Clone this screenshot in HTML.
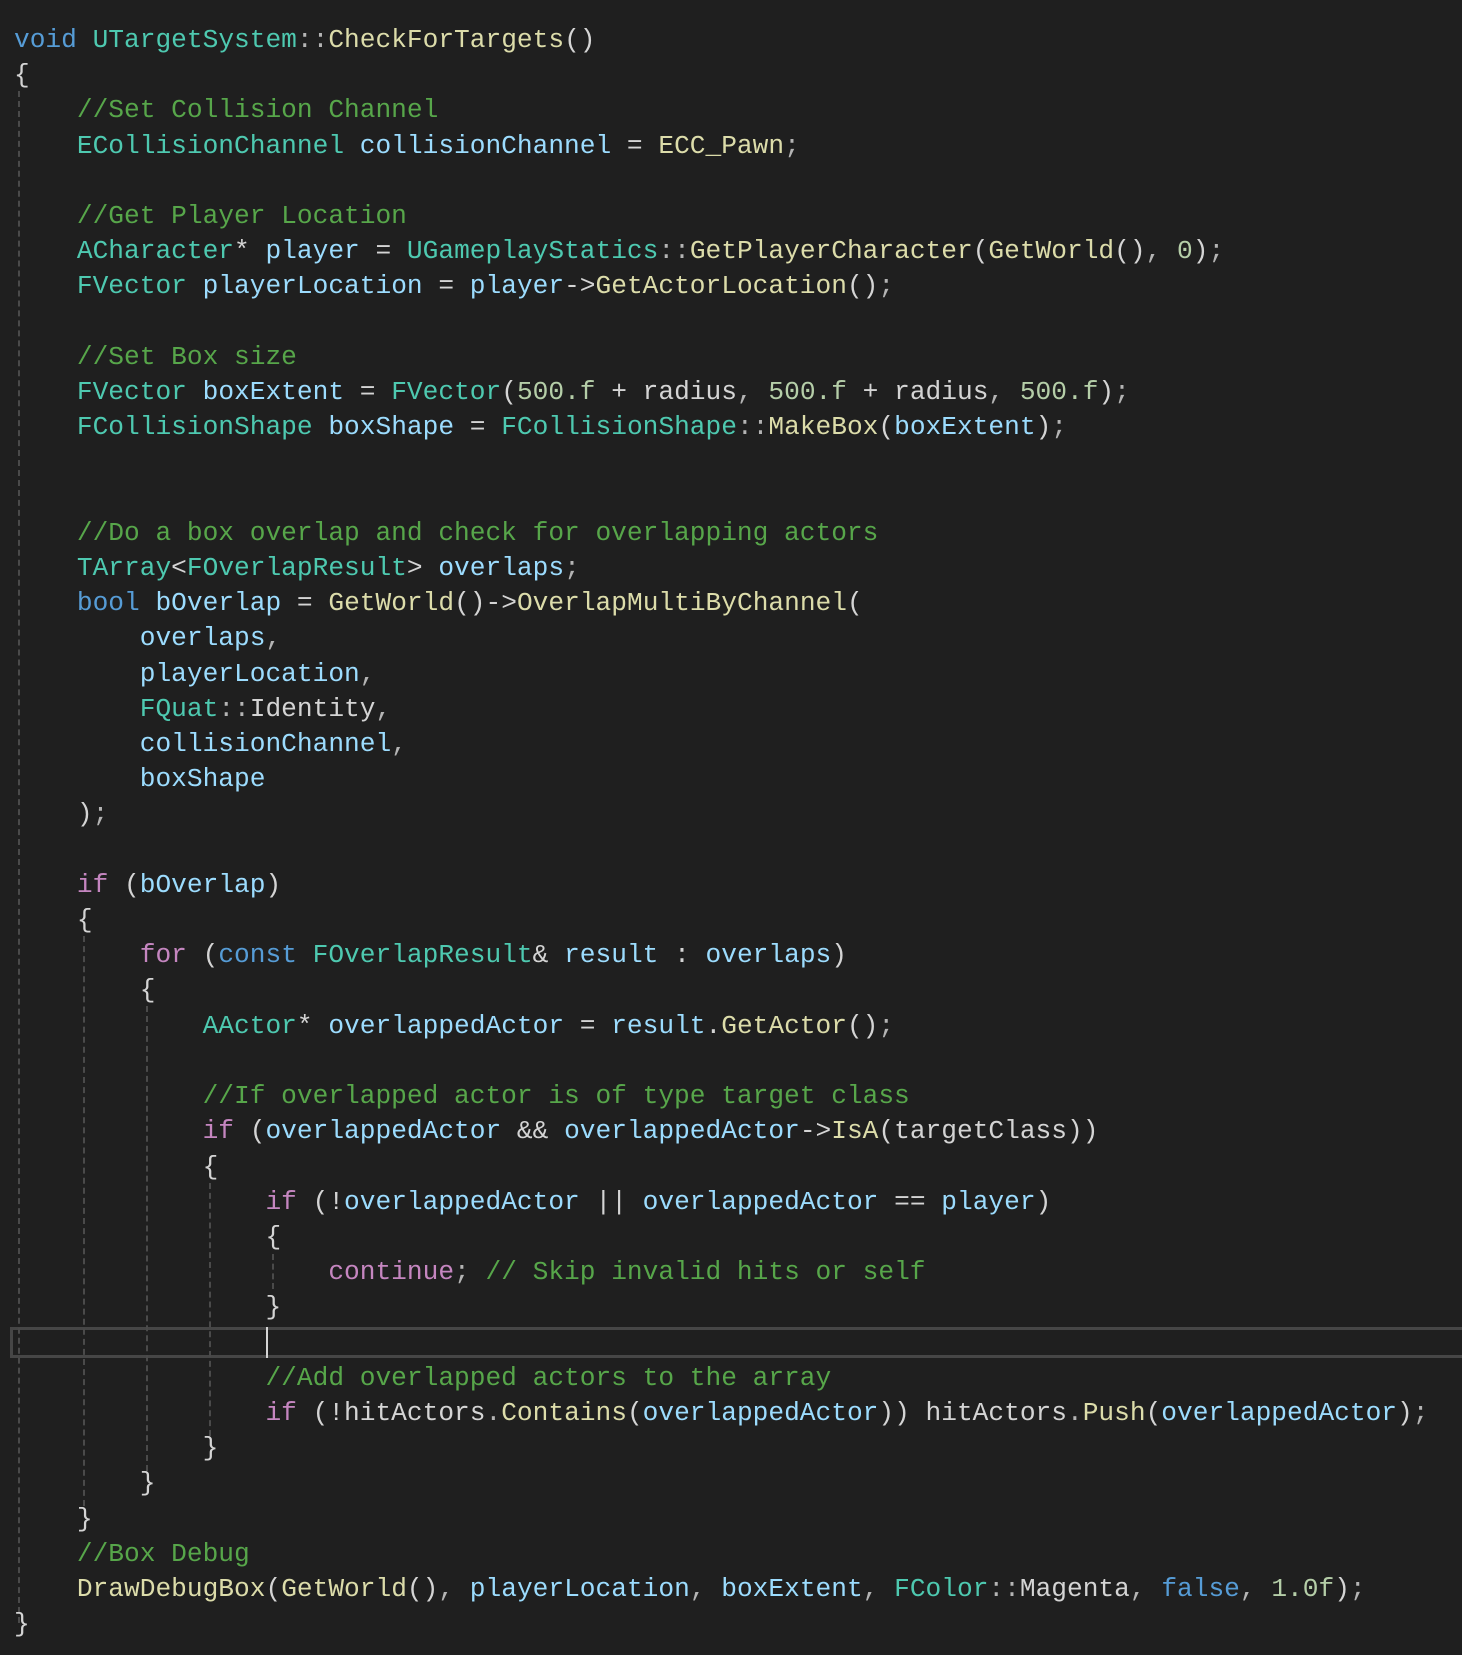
<!DOCTYPE html>
<html><head><meta charset="utf-8"><style>
html,body{margin:0;padding:0;background:#1f1f1f;width:1462px;height:1655px;overflow:hidden}
pre{position:absolute;left:14px;top:23px;margin:0;font-family:"Liberation Mono",monospace;font-size:26.2px;line-height:35.2px;color:#d4d4d4;white-space:pre}
.k{color:#569cd6}.c{color:#c586c0}.t{color:#4ec9b0}.f{color:#dcdcaa}.v{color:#9cdcfe}.m{color:#57a64a}.n{color:#b5cea8}.p{color:#b4b4b4}
.g{position:absolute;width:0;border-left:2px dashed #4a4a4a}
.hl{position:absolute;left:10px;top:1327px;width:1460px;height:25px;border:3px solid #464646;border-right:none}
.cur{position:absolute;left:266px;top:1327px;width:2px;height:31px;background:#d4d4d4}
</style></head><body>
<div class="hl"></div>
<div class="g" style="left:18px;top:91px;height:1532px"></div>
<div class="g" style="left:83px;top:936px;height:570px"></div>
<div class="g" style="left:146px;top:1006px;height:465px"></div>
<div class="g" style="left:209px;top:1183px;height:253px"></div>
<div class="g" style="left:272px;top:1254px;height:35px"></div>
<div class="cur"></div>
<pre><span class="k">void</span> <span class="t">UTargetSystem</span><span class="p">::</span><span class="f">CheckForTargets</span>()
{
    <span class="m">//Set Collision Channel</span>
    <span class="t">ECollisionChannel</span> <span class="v">collisionChannel</span> = <span class="f">ECC_Pawn</span><span class="p">;</span>

    <span class="m">//Get Player Location</span>
    <span class="t">ACharacter</span>* <span class="v">player</span> = <span class="t">UGameplayStatics</span><span class="p">::</span><span class="f">GetPlayerCharacter</span>(<span class="f">GetWorld</span>()<span class="p">,</span> <span class="n">0</span>)<span class="p">;</span>
    <span class="t">FVector</span> <span class="v">playerLocation</span> = <span class="v">player</span>-><span class="f">GetActorLocation</span>()<span class="p">;</span>

    <span class="m">//Set Box size</span>
    <span class="t">FVector</span> <span class="v">boxExtent</span> = <span class="t">FVector</span>(<span class="n">500.f</span> + radius<span class="p">,</span> <span class="n">500.f</span> + radius<span class="p">,</span> <span class="n">500.f</span>)<span class="p">;</span>
    <span class="t">FCollisionShape</span> <span class="v">boxShape</span> = <span class="t">FCollisionShape</span><span class="p">::</span><span class="f">MakeBox</span>(<span class="v">boxExtent</span>)<span class="p">;</span>


    <span class="m">//Do a box overlap and check for overlapping actors</span>
    <span class="t">TArray</span>&lt;<span class="t">FOverlapResult</span>&gt; <span class="v">overlaps</span><span class="p">;</span>
    <span class="k">bool</span> <span class="v">bOverlap</span> = <span class="f">GetWorld</span>()-><span class="f">OverlapMultiByChannel</span>(
        <span class="v">overlaps</span><span class="p">,</span>
        <span class="v">playerLocation</span><span class="p">,</span>
        <span class="t">FQuat</span><span class="p">::</span>Identity<span class="p">,</span>
        <span class="v">collisionChannel</span><span class="p">,</span>
        <span class="v">boxShape</span>
    )<span class="p">;</span>

    <span class="c">if</span> (<span class="v">bOverlap</span>)
    {
        <span class="c">for</span> (<span class="k">const</span> <span class="t">FOverlapResult</span>&amp; <span class="v">result</span> : <span class="v">overlaps</span>)
        {
            <span class="t">AActor</span>* <span class="v">overlappedActor</span> = <span class="v">result</span>.<span class="f">GetActor</span>()<span class="p">;</span>

            <span class="m">//If overlapped actor is of type target class</span>
            <span class="c">if</span> (<span class="v">overlappedActor</span> &amp;&amp; <span class="v">overlappedActor</span>-><span class="f">IsA</span>(targetClass))
            {
                <span class="c">if</span> (!<span class="v">overlappedActor</span> || <span class="v">overlappedActor</span> == <span class="v">player</span>)
                {
                    <span class="c">continue</span><span class="p">;</span> <span class="m">// Skip invalid hits or self</span>
                }

                <span class="m">//Add overlapped actors to the array</span>
                <span class="c">if</span> (!hitActors<span class="p">.</span><span class="f">Contains</span>(<span class="v">overlappedActor</span>)) hitActors<span class="p">.</span><span class="f">Push</span>(<span class="v">overlappedActor</span>)<span class="p">;</span>
            }
        }
    }
    <span class="m">//Box Debug</span>
    <span class="f">DrawDebugBox</span>(<span class="f">GetWorld</span>()<span class="p">,</span> <span class="v">playerLocation</span><span class="p">,</span> <span class="v">boxExtent</span><span class="p">,</span> <span class="t">FColor</span><span class="p">::</span>Magenta<span class="p">,</span> <span class="k">false</span><span class="p">,</span> <span class="n">1.0f</span>)<span class="p">;</span>
}</pre>
</body></html>
